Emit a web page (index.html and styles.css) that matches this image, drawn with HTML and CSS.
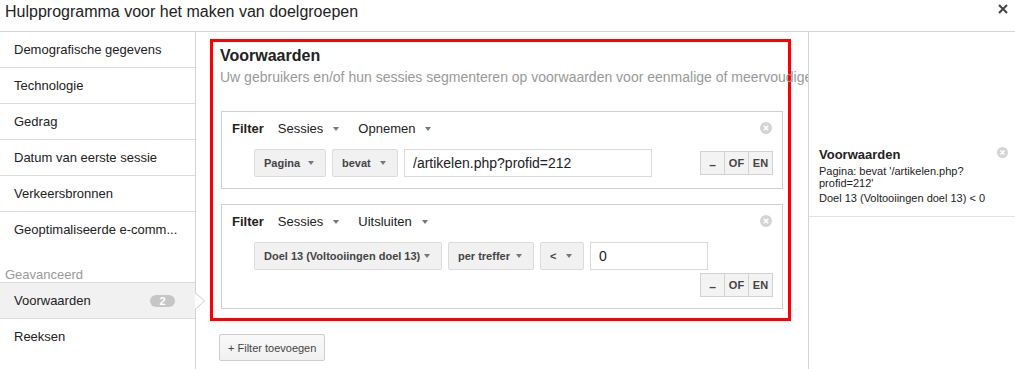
FILE: index.html
```html
<!DOCTYPE html>
<html lang="nl">
<head>
  <meta charset="UTF-8">
  <meta name="viewport" content="width=device-width, initial-scale=1.0">
  <title>Doelgroepen</title>
  <link rel="stylesheet" href="styles.css">
</head>
<body>
  <header class="dialog-header">
    <h1 class="dialog-title">Hulpprogramma voor het maken van doelgroepen</h1>
    <span class="dialog-close">
      <svg width="10" height="10" viewBox="0 0 10 10"><path d="M1 1l8 8M9 1l-8 8" stroke="#444" stroke-width="2"/></svg>
    </span>
  </header>

  <div class="dialog-body">
    <nav class="sidebar">
      <div class="nav-item">Demografische gegevens</div>
      <div class="nav-item">Technologie</div>
      <div class="nav-item">Gedrag</div>
      <div class="nav-item">Datum van eerste sessie</div>
      <div class="nav-item">Verkeersbronnen</div>
      <div class="nav-item plain">Geoptimaliseerde e-comm...</div>
      <div class="nav-group">Geavanceerd</div>
      <div class="nav-item active">Voorwaarden <span class="badge">2</span></div>
      <div class="nav-item plain">Reeksen</div>
    </nav>

    <main class="editor">
      <section class="conditions">
        <h2 class="conditions-title">Voorwaarden</h2>
        <p class="conditions-sub">Uw gebruikers en/of hun sessies segmenteren op voorwaarden voor eenmalige of meervoudige sessies.</p>

        <div class="filter">
          <div class="filter-head">
            <span class="filter-label">Filter</span>
            <span class="menu">Sessies <i class="caret"></i></span>
            <span class="menu">Opnemen <i class="caret"></i></span>
            <span class="remove">
              <svg width="12" height="12" viewBox="0 0 12 12"><circle cx="6" cy="6" r="6" fill="#d4d4d4"/><path d="M3.8 3.8l4.4 4.4M8.2 3.8l-4.4 4.4" stroke="#fff" stroke-width="1.6"/></svg>
            </span>
          </div>
          <div class="filter-row">
            <span class="dd dd-page">Pagina <i class="caret"></i></span>
            <span class="dd dd-match">bevat <i class="caret"></i></span>
            <input class="value value-wide" type="text" value="/artikelen.php?profid=212">
            <div class="logic"><span class="minus">&ndash;</span><span>OF</span><span>EN</span></div>
          </div>
        </div>

        <div class="filter">
          <div class="filter-head">
            <span class="filter-label">Filter</span>
            <span class="menu">Sessies <i class="caret"></i></span>
            <span class="menu">Uitsluiten <i class="caret"></i></span>
            <span class="remove">
              <svg width="12" height="12" viewBox="0 0 12 12"><circle cx="6" cy="6" r="6" fill="#d4d4d4"/><path d="M3.8 3.8l4.4 4.4M8.2 3.8l-4.4 4.4" stroke="#fff" stroke-width="1.6"/></svg>
            </span>
          </div>
          <div class="filter-row">
            <span class="dd dd-metric">Doel 13 (Voltooiingen doel 13) <i class="caret"></i></span>
            <span class="dd dd-scope">per treffer <i class="caret"></i></span>
            <span class="dd dd-op">&lt; <i class="caret"></i></span>
            <input class="value value-small" type="text" value="0">
            <div class="logic"><span class="minus">&ndash;</span><span>OF</span><span>EN</span></div>
          </div>
        </div>
      </section>

      <button class="add-filter">+ Filter toevoegen</button>
    </main>

    <aside class="summary">
      <div class="summary-block">
        <div class="summary-head">
          <span class="summary-title">Voorwaarden</span>
          <svg width="11" height="11" viewBox="0 0 12 12"><circle cx="6" cy="6" r="6" fill="#d4d4d4"/><path d="M3.8 3.8l4.4 4.4M8.2 3.8l-4.4 4.4" stroke="#fff" stroke-width="1.6"/></svg>
        </div>
        <p class="summary-line">Pagina: bevat '/artikelen.php?<wbr>profid=212'</p>
        <p class="summary-line gap">Doel 13 (Voltooiingen doel 13) &lt; 0</p>
      </div>
    </aside>
  </div>
</body>
</html>
```

FILE: styles.css
```css
body {
  margin: 0; height: 100vh;
  font-family: "Liberation Sans", Arial, sans-serif; color: #222;
  display: flex; flex-direction: column; overflow: hidden;
}

/* header */
.dialog-header {
  display: flex; align-items: flex-start; justify-content: space-between;
  height: 31px; border-bottom: 1px solid #d4d4d4; flex: none;
}
.dialog-title {
  margin: 0; padding: 2px 0 0 5px;
  font-size: 16px; font-weight: normal; line-height: 20px; color: #222;
}
.dialog-close { display: flex; margin: 4px 7px 0 0; }

.dialog-body { display: flex; flex: 1; min-height: 0; }

/* left nav */
.sidebar {
  width: 195px; flex: none; border-right: 1px solid #d4d4d4;
  position: relative; z-index: 1; font-size: 13px;
}
.nav-item {
  display: flex; align-items: center; height: 35px;
  padding: 0 20px 0 14px; border-bottom: 1px solid #dcdcdc;
  position: relative; color: #222; white-space: nowrap;
}
.nav-item.plain { border-bottom-color: transparent; }
.nav-group {
  height: 35px; box-sizing: border-box; padding: 19px 0 0 5px;
  line-height: 16px; color: #999; border-bottom: 1px solid #dcdcdc;
}
.nav-item.active { background: #f1f1f1; }
.nav-item.active::before,
.nav-item.active::after {
  content: ""; position: absolute; left: 195px; width: 0; height: 0;
  border-style: solid; border-color: transparent;
}
.nav-item.active::before {
  top: 9px; border-width: 9px 0 9px 10px; border-left-color: #c8c8c8;
}
.nav-item.active::after {
  top: 10px; border-width: 8px 0 8px 9px; border-left-color: #fff;
}
.badge {
  margin-left: auto; width: 25px; height: 12px; border-radius: 6px;
  background: #c6c6c6; color: #fff; font-size: 11px; font-weight: bold;
  line-height: 12px; text-align: center;
}

/* editor */
.editor {
  flex: 1; min-width: 0; overflow: hidden;
  padding: 7px 17px 0 14px;
}
.conditions {
  border: 3px solid #f00; padding: 4px 5px 9px 7px;
}
.conditions-title {
  margin: 0; font-size: 16px; line-height: 20px; color: #222;
}
.conditions-sub {
  margin: 2px 0 25px; font-size: 14px; line-height: 18px; color: #999;
  white-space: nowrap;
}
.filter {
  border: 1px solid #cfcfcf; margin: 0 0 15px 1px; padding-bottom: 11px;
}
.filter:last-child { margin-bottom: 0; }
.filter-head {
  display: flex; align-items: center; height: 16px;
  padding: 8px 10px 0 10px; font-size: 13px; color: #222;
}
.filter-label { font-weight: bold; margin-right: 14px; }
.menu { display: flex; align-items: center; margin-right: 19px; }
.menu .caret { margin-left: 10px; margin-top: 1px; }
.remove { margin-left: auto; display: flex; }

.caret {
  display: inline-block; width: 0; height: 0;
  border-top: 4px solid #777; border-left: 3.5px solid transparent; border-right: 3.5px solid transparent;
}

.filter-row {
  display: flex; flex-wrap: wrap; align-items: center; gap: 3px 6px;
  margin-top: 13px; padding: 0 9px 0 32px;
}
.dd {
  display: flex; align-items: center; justify-content: space-between;
  height: 28px; box-sizing: border-box; padding: 0 11px 0 9px;
  background: #f1f1f1; border: 1px solid #dcdcdc; border-radius: 2px;
  font-size: 11px; font-weight: bold; color: #444; white-space: nowrap;
}
.dd-page { width: 72px; }
.dd-match { width: 66px; }
.dd-metric { width: 188px; }
.dd-scope { width: 86px; }
.dd-op { width: 44px; }
.value {
  height: 28px; box-sizing: border-box; margin: 0; padding: 0 8px;
  border: 1px solid #d9d9d9; border-radius: 0;
  font-family: "Liberation Sans", Arial, sans-serif; font-size: 14px; color: #222;
}
.value-wide { width: 248px; }
.value-small { width: 118px; }
.logic { display: flex; margin-left: auto; }
.logic span {
  width: 25px; height: 24px; box-sizing: border-box;
  display: flex; align-items: center; justify-content: center;
  border: 1px solid #d2d2d2; background: #f3f3f3;
  font-size: 11px; font-weight: bold; color: #444;
}
.logic .minus { padding-top: 4px; font-size: 12px; }
.logic span + span { margin-left: -1px; }

.add-filter {
  margin: 13px 0 0 9px; height: 27px; padding: 0 8px;
  border: 1px solid #cdcdcd; border-radius: 2px;
  background: linear-gradient(#f8f8f8, #f1f1f1);
  font-family: "Liberation Sans", Arial, sans-serif; font-size: 11px; color: #444;
}

/* summary */
.summary {
  width: 206px; flex: none; border-left: 1px solid #d4d4d4;
  padding-top: 115px;
}
.summary-block {
  padding: 0 7px 12px 10px; border-bottom: 1px solid #e2e2e2;
}
.summary-head { display: flex; justify-content: space-between; align-items: flex-start; }
.summary-title { font-size: 13px; font-weight: bold; line-height: 16px; }
.summary-line { margin: 2px 0 0; font-size: 11px; line-height: 12px; color: #222; }
.summary-line.gap { margin-top: 3px; }
```
